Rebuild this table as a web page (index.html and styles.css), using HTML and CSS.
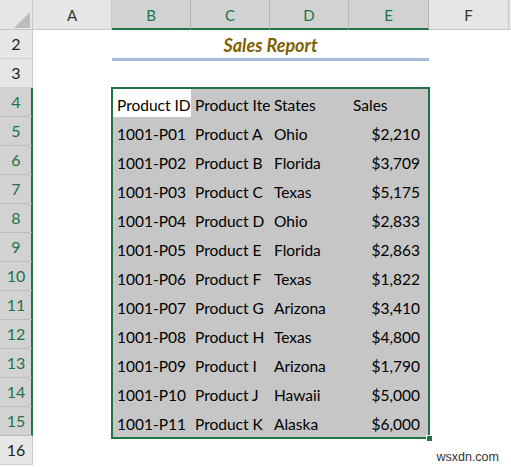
FILE: index.html
```html
<!DOCTYPE html>
<html>
<head>
<meta charset="utf-8">
<link rel="stylesheet" href="styles.css">
</head>
<body>
<div class="sheet">
  <div class="colhead">
    <div class="corner"><svg width="33" height="30" viewBox="0 0 33 30"><polygon points="14,28 30,28 30,12" fill="#bcbcbc"/></svg></div>
    <div class="ch w79">A</div>
    <div class="ch sel w79">B</div>
    <div class="ch sel w79">C</div>
    <div class="ch sel w79">D</div>
    <div class="ch sel w80">E</div>
    <div class="ch w80">F</div>
    <div class="ch rest"></div>
  </div>
  <div class="main">
    <div class="rowheads">
      <div class="rh">2</div>
      <div class="rh">3</div>
      <div class="rh on">4</div>
      <div class="rh on">5</div>
      <div class="rh on">6</div>
      <div class="rh on">7</div>
      <div class="rh on">8</div>
      <div class="rh on">9</div>
      <div class="rh on">10</div>
      <div class="rh on">11</div>
      <div class="rh on">12</div>
      <div class="rh on">13</div>
      <div class="rh on">14</div>
      <div class="rh on">15</div>
      <div class="rh">16</div>
    </div>
    <div class="cells">
      <div class="title-row"><div class="title">Sales Report</div></div>
      <div class="gap-row"></div>
      <div class="selbox">
        <div class="r">
          <div class="c b active">Product ID</div>
          <div class="c cc">Product Item</div>
          <div class="c d">States</div>
          <div class="c e left">Sales</div>
        </div>
        <div class="r"><div class="c b">1001-P01</div><div class="c cc">Product A</div><div class="c d">Ohio</div><div class="c e">$2,210</div></div>
        <div class="r"><div class="c b">1001-P02</div><div class="c cc">Product B</div><div class="c d">Florida</div><div class="c e">$3,709</div></div>
        <div class="r"><div class="c b">1001-P03</div><div class="c cc">Product C</div><div class="c d">Texas</div><div class="c e">$5,175</div></div>
        <div class="r"><div class="c b">1001-P04</div><div class="c cc">Product D</div><div class="c d">Ohio</div><div class="c e">$2,833</div></div>
        <div class="r"><div class="c b">1001-P05</div><div class="c cc">Product E</div><div class="c d">Florida</div><div class="c e">$2,863</div></div>
        <div class="r"><div class="c b">1001-P06</div><div class="c cc">Product F</div><div class="c d">Texas</div><div class="c e">$1,822</div></div>
        <div class="r"><div class="c b">1001-P07</div><div class="c cc">Product G</div><div class="c d">Arizona</div><div class="c e">$3,410</div></div>
        <div class="r"><div class="c b">1001-P08</div><div class="c cc">Product H</div><div class="c d">Texas</div><div class="c e">$4,800</div></div>
        <div class="r"><div class="c b">1001-P09</div><div class="c cc">Product I</div><div class="c d">Arizona</div><div class="c e">$1,790</div></div>
        <div class="r"><div class="c b">1001-P10</div><div class="c cc">Product J</div><div class="c d">Hawaii</div><div class="c e">$5,000</div></div>
        <div class="r"><div class="c b">1001-P11</div><div class="c cc">Product K</div><div class="c d">Alaska</div><div class="c e">$6,000</div></div>
        <div class="handle"></div>
      </div>
    </div>
  </div>
  <div class="wm">wsxdn.com</div>
</div>
</body>
</html>
```

FILE: styles.css
```css
html, body {
  margin: 0;
  padding: 0;
  background: #ffffff;
}
.sheet {
  width: 511px;
  height: 467px;
  overflow: hidden;
  font-family: Lato, "Open Sans", sans-serif;
  color: #000;
  position: relative;
}
.colhead {
  display: flex;
  height: 30px;
}
.corner {
  width: 33px;
  flex: none;
  background: #e6e6e6;
  border-right: 1px solid #c8c8c8;
  border-bottom: 1px solid #c8c8c8;
  box-sizing: border-box;
  overflow: hidden;
}
.corner svg { display: block; }
.ch {
  flex: none;
  box-sizing: border-box;
  height: 30px;
  background: #e6e6e6;
  border-right: 1px solid #c8c8c8;
  border-bottom: 1px solid #c8c8c8;
  color: #333;
  font-size: 15px;
  line-height: 29px;
  text-align: center;
  padding-top: 1px;
}
.ch.w79 { width: 79px; }
.ch.w80 { width: 80px; }
.ch.rest { flex: 1; border-right: none; }
.ch.sel {
  background: #d2d2d2;
  color: #217346;
  border-bottom: 2px solid #217346;
  border-right-color: #b4b4b4;
  line-height: 28px;
}
.main {
  display: flex;
}
.rowheads {
  width: 33px;
  flex: none;
}
.rh {
  box-sizing: border-box;
  height: 29px;
  background: #e6e6e6;
  border-bottom: 1px solid #d0d0d0;
  border-right: 1px solid #c8c8c8;
  text-align: center;
  font-size: 16px;
  line-height: 28px;
  color: #222;
}
.rh.on {
  background: #d2d2d2;
  color: #217346;
  border-right: 2px solid #217346;
  border-bottom-color: #bcbcbc;
  padding-left: 1px;
}
.cells {
  flex: 1;
  position: relative;
}
.title-row {
  height: 31px;
  padding-left: 79px;
}
.title {
  width: 317px;
  height: 28px;
  border-bottom: 3px solid #a9b9de;
  text-align: center;
  font-weight: bold;
  font-style: italic;
  font-size: 18px;
  line-height: 30px;
  color: #7f6000;
}
.gap-row {
  height: 26px;
}
.selbox {
  position: relative;
  margin-left: 78px;
  width: 315px;
  border: 2px solid #217346;
  background: #c6c6c6;
}
.r {
  display: flex;
  height: 29px;
}
.c {
  box-sizing: border-box;
  font-size: 15.5px;
  line-height: 29px;
  padding-top: 2px;
  white-space: nowrap;
  overflow: hidden;
  padding-left: 4px;
}
.c.b { width: 78px; }
.c.cc { width: 79px; }
.c.d { width: 79px; }
.c.e { width: 79px; text-align: right; padding-right: 8px; }
.c.e.left { text-align: left; padding-left: 4px; }
.c.active {
  background: #ffffff;
  height: 28px;
}
.handle {
  position: absolute;
  right: -5px;
  bottom: -5px;
  width: 5px;
  height: 5px;
  background: #217346;
  border: 1px solid #ffffff;
}
.wm {
  position: absolute;
  right: 12px;
  bottom: 3px;
  line-height: 14px;
  font-family: "Liberation Sans", Arial, sans-serif;
  font-size: 12.5px;
  color: #333;
}
```
